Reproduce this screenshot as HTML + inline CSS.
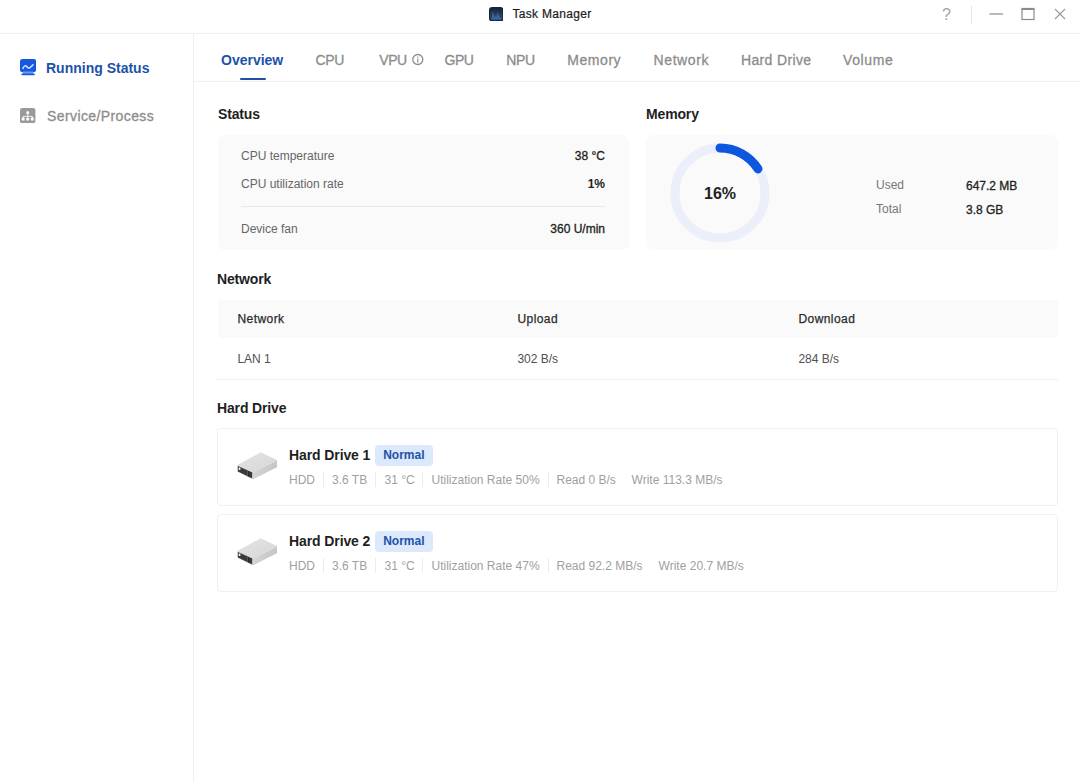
<!DOCTYPE html>
<html>
<head>
<meta charset="utf-8">
<title>Task Manager</title>
<style>
*{box-sizing:border-box;margin:0;padding:0}
html,body{width:1080px;height:782px;overflow:hidden;background:#fff}
body{font-family:"Liberation Sans",sans-serif;color:#222;position:relative;font-size:12px}
.abs{position:absolute;white-space:nowrap}
.titlebar{position:absolute;left:0;top:0;width:1080px;height:34px;border-bottom:1px solid #f0f0f0;background:#fff}
.sidebar{position:absolute;left:0;top:34px;width:194px;height:748px;border-right:1px solid #f0f0f0;background:#fff}
.tabline{position:absolute;left:194px;top:81px;width:886px;height:1px;background:#f0f0f0}
.tab{position:absolute;top:52px;font-size:14px;line-height:16px;color:#8c8c8c;letter-spacing:.35px;white-space:nowrap;-webkit-text-stroke:.3px #8c8c8c}
.tab.on{color:#1d52aa;font-weight:bold;letter-spacing:0;-webkit-text-stroke:0}
.h{position:absolute;font-size:14px;line-height:16px;font-weight:bold;color:#1f1f1f;white-space:nowrap;letter-spacing:-.15px}
.card{position:absolute;background:#fafafa;border-radius:7px}
.lbl{position:absolute;font-size:12px;line-height:14px;color:#666;white-space:nowrap}
.val{position:absolute;font-size:12px;line-height:14px;color:#222;white-space:nowrap;text-align:right;-webkit-text-stroke:.3px #222}
.hd{position:absolute;left:217px;width:841px;height:78px;border:1px solid #f0f0f0;border-radius:4px;background:#fff}
.hdt{position:absolute;left:71px;top:18px;font-size:14px;line-height:16px;font-weight:bold;color:#1f1f1f;white-space:nowrap;letter-spacing:-.1px}
.badge{position:absolute;top:16px;height:20.5px;border-radius:4px;background:#dce8fb;color:#1d52aa;font-size:12px;line-height:21px;font-weight:bold;text-align:center;white-space:nowrap}
.meta{position:absolute;top:44px;font-size:12px;line-height:14px;color:#a0a0a0;white-space:nowrap}
.sep{position:absolute;top:42.7px;width:1px;height:15px;background:#ececec}
</style>
</head>
<body>

<!-- title bar -->
<div class="titlebar">
  <svg class="abs" style="left:488.7px;top:6.6px" width="14.5" height="14.7" viewBox="0 0 16 16">
    <defs><linearGradient id="gIco" x1="0" y1="0" x2="0" y2="1"><stop offset="0" stop-color="#1d2535"/><stop offset=".5" stop-color="#263d63"/><stop offset="1" stop-color="#2a5389"/></linearGradient></defs>
    <rect x="0" y="0" width="16" height="16" rx="3.6" fill="#1b2331"/>
    <rect x="1.4" y="1.5" width="13.2" height="13.1" rx="2.4" fill="url(#gIco)"/>
    <path d="M3 13 L4 4.5 L6.5 10 L8 11 L9.5 5.5 L11.5 11 L13.5 12.5 L13.5 13 Z" fill="#5b8ac4" opacity=".42"/>
  </svg>
  <div class="abs" id="title" style="left:512.5px;top:6px;font-size:12px;line-height:16px;color:#1c1c1c;letter-spacing:.3px;-webkit-text-stroke:.2px #1c1c1c">Task Manager</div>
  <div class="abs" id="q" style="left:942px;top:5px;font-size:16px;line-height:20px;color:#a3a3a3">?</div>
  <div class="abs" style="left:971px;top:6px;width:1px;height:18px;background:#e3e3e3"></div>
  <svg class="abs" style="left:985px;top:4px" width="90" height="22" viewBox="0 0 90 22">
    <path d="M4.5 10 H18" stroke="#8a8a8a" stroke-width="1.2" fill="none"/>
    <rect x="37" y="4.5" width="12" height="11" fill="none" stroke="#8a8a8a" stroke-width="1.2"/>
    <path d="M37 5 H49" stroke="#8a8a8a" stroke-width="2" fill="none"/>
    <path d="M70 5 L80 15 M80 5 L70 15" stroke="#999" stroke-width="1.1" fill="none"/>
  </svg>
</div>

<!-- sidebar -->
<div class="sidebar">
  <svg class="abs" style="left:20px;top:25.4px" width="16.2" height="16.4" viewBox="0 0 16.2 16.4">
    <rect x="0" y="0" width="16.2" height="13.2" rx="2.6" fill="#1658e2"/>
    <rect x="3" y="12.5" width="10.2" height="2.6" fill="#6d97ee"/>
    <rect x="1.4" y="14.5" width="13.4" height="1.7" rx=".8" fill="#1658e2"/>
    <path d="M2.9 9.4 C4.2 6.4 5.6 6.2 7.1 8 C8.6 9.8 10 9.4 13 5.8" stroke="#dbe7ff" stroke-width="1.5" fill="none" stroke-linecap="round"/>
  </svg>
  <div class="abs" id="side1" style="left:46px;top:26px;font-size:14px;line-height:16px;font-weight:bold;color:#1d52aa;letter-spacing:0">Running Status</div>
  <svg class="abs" style="left:20.2px;top:73.8px" width="15.4" height="15.4" viewBox="0 0 16 16">
    <rect x="0" y="0" width="16" height="16" rx="2.4" fill="#9a9a9a"/>
    <rect x="6.6" y="3.3" width="2.9" height="2.9" rx=".9" fill="#fff"/>
    <path d="M8.05 6 V8.7 M3.3 10.4 V8.7 H12.8 V10.4" stroke="#fff" stroke-width=".9" fill="none"/>
    <rect x="1.8" y="10" width="3" height="3.1" rx=".9" fill="#fff"/>
    <rect x="6.55" y="10" width="3" height="3.1" rx=".9" fill="#fff"/>
    <rect x="11.3" y="10" width="3" height="3.1" rx=".9" fill="#fff"/>
  </svg>
  <div class="abs" id="side2" style="left:47px;top:74px;font-size:14px;line-height:16px;color:#8c8c8c;letter-spacing:.4px;-webkit-text-stroke:.3px #8c8c8c">Service/Process</div>
</div>

<!-- tabs -->
<div class="tab on" id="t0" style="left:221px">Overview</div>
<div class="tab" id="t1" style="left:315.6px;letter-spacing:-.45px">CPU</div>
<div class="tab" id="t2" style="left:379.3px;letter-spacing:-.45px">VPU</div>
<svg class="abs" style="left:411px;top:53px" width="14" height="14" viewBox="0 0 14 14"><circle cx="6.8" cy="6.5" r="5" fill="none" stroke="#8c8c8c" stroke-width="1.3"/><path d="M6.8 3.6 V4.7 M6.8 5.7 V9.4" stroke="#8c8c8c" stroke-width="1.2"/></svg>
<div class="tab" id="t3" style="left:444.6px;letter-spacing:-.5px">GPU</div>
<div class="tab" id="t4" style="left:506.3px;letter-spacing:-.4px">NPU</div>
<div class="tab" id="t5" style="left:567.3px;letter-spacing:.55px">Memory</div>
<div class="tab" id="t6" style="left:653.6px;letter-spacing:.58px">Network</div>
<div class="tab" id="t7" style="left:741px">Hard Drive</div>
<div class="tab" id="t8" style="left:843px;letter-spacing:.63px">Volume</div>
<div class="abs" style="left:240px;top:77.8px;width:25.6px;height:2.2px;border-radius:1px;background:#1d50a6"></div>
<div class="tabline"></div>

<!-- Status -->
<div class="h" id="h1" style="left:218px;top:106px">Status</div>
<div class="card" style="left:217.5px;top:135px;width:411.5px;height:115px"></div>
<div class="lbl" id="l1" style="left:241px;top:149px">CPU temperature</div>
<div class="val" id="v1" style="right:475px;top:149px">38 °C</div>
<div class="lbl" id="l2" style="left:241px;top:177px">CPU utilization rate</div>
<div class="val" id="v2" style="right:475px;top:177px;font-weight:bold;-webkit-text-stroke:0">1%</div>
<div class="abs" style="left:241px;top:206px;width:364px;height:1px;background:#e8e8e8"></div>
<div class="lbl" id="l3" style="left:241px;top:222px">Device fan</div>
<div class="val" id="v3" style="right:475px;top:222px">360 U/min</div>

<!-- Memory -->
<div class="h" id="h2" style="left:646px;top:106px">Memory</div>
<div class="card" style="left:646.2px;top:135px;width:411.8px;height:115px"></div>
<svg class="abs" style="left:665px;top:138px" width="110" height="110" viewBox="0 0 110 110">
  <circle cx="55" cy="55" r="45" fill="none" stroke="#ebeff9" stroke-width="9"/>
  <path d="M55 10 A45 45 0 0 1 92.99 30.89" fill="none" stroke="#0d57e0" stroke-width="9" stroke-linecap="round"/>
</svg>
<div class="abs" id="pct" style="left:690px;top:184.5px;width:60px;text-align:center;font-size:16px;line-height:18px;font-weight:bold;color:#222">16%</div>
<div class="lbl" id="m1" style="left:876px;top:178px;color:#777">Used</div>
<div class="val" id="m2" style="left:966px;top:179px">647.2 MB</div>
<div class="lbl" id="m3" style="left:876px;top:202px;color:#777">Total</div>
<div class="val" id="m4" style="left:966px;top:203px">3.8 GB</div>

<!-- Network -->
<div class="h" id="h3" style="left:217px;top:271px">Network</div>
<div class="abs" style="left:217.5px;top:299.5px;width:840.5px;height:38.5px;background:#fafafa;border-radius:3px"></div>
<div class="lbl" id="n1" style="left:237.4px;top:312px;color:#2a2a2a;letter-spacing:.45px;-webkit-text-stroke:.25px #2a2a2a">Network</div>
<div class="lbl" id="n2" style="left:517.4px;top:312px;color:#2a2a2a;letter-spacing:.45px;-webkit-text-stroke:.25px #2a2a2a">Upload</div>
<div class="lbl" id="n3" style="left:798.4px;top:312px;color:#2a2a2a;letter-spacing:.45px;-webkit-text-stroke:.25px #2a2a2a">Download</div>
<div class="lbl" id="n4" style="left:237.4px;top:352px;color:#505050">LAN 1</div>
<div class="lbl" id="n5" style="left:517.4px;top:352px;color:#505050">302 B/s</div>
<div class="lbl" id="n6" style="left:798.4px;top:352px;color:#505050">284 B/s</div>
<div class="abs" style="left:217px;top:379px;width:841px;height:1px;background:#efefef"></div>

<!-- Hard Drive -->
<div class="h" id="h4" style="left:217px;top:400px">Hard Drive</div>

<div class="hd" style="top:428px">
  <svg class="abs" style="left:17.7px;top:21px" width="44" height="32" viewBox="0 0 44 32"><use href="#hddicon"/></svg>
  <div class="hdt" id="d1">Hard Drive 1</div>
  <div class="badge" id="b1" style="left:157px;width:57.7px">Normal</div>
  <div class="meta" id="x1" style="left:71px">HDD</div><div class="sep" style="left:104.5px"></div>
  <div class="meta" id="x2" style="left:114px">3.6 TB</div><div class="sep" style="left:157px"></div>
  <div class="meta" id="x3" style="left:166.6px">31 °C</div><div class="sep" style="left:204px"></div>
  <div class="meta" id="x4" style="left:213.5px">Utilization Rate 50%</div><div class="sep" style="left:329.5px"></div>
  <div class="meta" id="x5" style="left:338.5px">Read 0 B/s</div>
  <div class="meta" id="x6" style="left:413.6px">Write 113.3 MB/s</div>
</div>

<div class="hd" style="top:514px">
  <svg class="abs" style="left:17.7px;top:21px" width="44" height="32" viewBox="0 0 44 32"><use href="#hddicon"/></svg>
  <div class="hdt" id="d2">Hard Drive 2</div>
  <div class="badge" id="b2" style="left:157px;width:57.7px">Normal</div>
  <div class="meta" id="y1" style="left:71px">HDD</div><div class="sep" style="left:104.5px"></div>
  <div class="meta" id="y2" style="left:114px">3.6 TB</div><div class="sep" style="left:157px"></div>
  <div class="meta" id="y3" style="left:166.6px">31 °C</div><div class="sep" style="left:204px"></div>
  <div class="meta" id="y4" style="left:213.5px">Utilization Rate 47%</div><div class="sep" style="left:329.5px"></div>
  <div class="meta" id="y5" style="left:338.5px">Read 92.2 MB/s</div>
  <div class="meta" id="y6" style="left:440.6px">Write 20.7 MB/s</div>
</div>

<svg width="0" height="0" style="position:absolute">
  <defs>
    <linearGradient id="gTop" x1="0" y1="0" x2="1" y2="1"><stop offset="0" stop-color="#e5e5e5"/><stop offset="1" stop-color="#d5d5d5"/></linearGradient><linearGradient id="gSide" x1="0" y1="0" x2="1" y2="0"><stop offset="0" stop-color="#d4d4d4"/><stop offset="1" stop-color="#c6c6c6"/></linearGradient>
    <g id="hddicon">
      <path d="M24.7 2.5 L41 10.2 L41 16.9 L17 29.3 L1.4 21.4 L1.4 15.3 Z" fill="#d2d2d2"/>
      <path d="M24.7 2.5 L41 10.2 L17.7 22 L1.4 15.3 Z" fill="url(#gTop)"/>
      <path d="M17.7 22 L41 10.2 L41 16.9 L17 29.3 Z" fill="url(#gSide)"/>
      <path d="M1.4 15.3 L17.7 22 L17 29.3 L1.4 21.4 Z" fill="#dcdcdc"/>
      <path d="M1.9 15.9 L16.3 22.5 L16.1 28.5 L1.9 21.4 Z" fill="#3b3b3b"/>
      <path d="M11.6 20.6 L11.6 26" stroke="#6a6a6a" stroke-width=".7"/>
      <path d="M12.8 21.2 L12.8 26.6" stroke="#222" stroke-width=".9"/>
      <rect x="2.7" y="17.6" width="1.7" height="2.3" fill="#fff"/>
      <path d="M17.7 22 L41 10.2" stroke="#e8e8e8" stroke-width=".6" fill="none"/>
    </g>
  </defs>
</svg>

</body>
</html>
